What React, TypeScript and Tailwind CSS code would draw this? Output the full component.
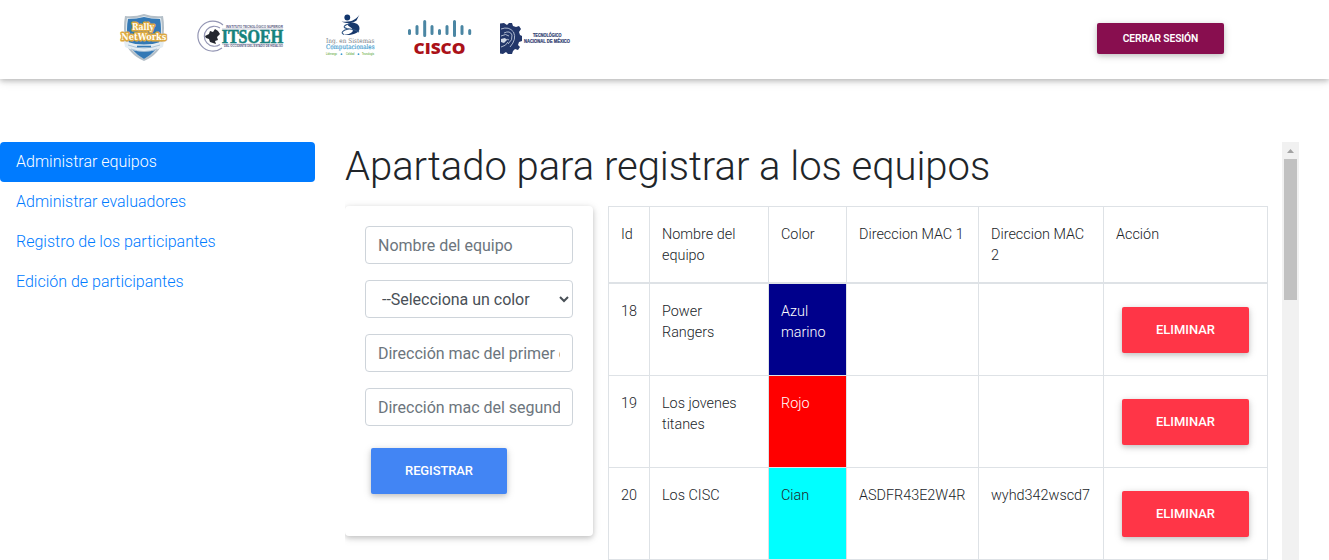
import React from "react";

type Team = {
  id: number;
  name: string;
  color: string;
  cell: string;
  mac1: string;
  mac2: string;
};

const teams: Team[] = [
  { id: 18, name: "Power Rangers", color: "Azul marino", cell: "bg-[#00008b] text-white", mac1: "", mac2: "" },
  { id: 19, name: "Los jovenes titanes", color: "Rojo", cell: "bg-[#ff0000] text-white", mac1: "", mac2: "" },
  { id: 20, name: "Los CISC", color: "Cian", cell: "bg-[#00ffff] text-[#212529]", mac1: "ASDFR43E2W4R", mac2: "wyhd342wscd7" },
];

const links = [
  "Administrar equipos",
  "Administrar evaluadores",
  "Registro de los participantes",
  "Edición de participantes",
];

const raised = "shadow-[0_2px_5px_0_rgba(0,0,0,0.16),0_2px_10px_0_rgba(0,0,0,0.12)]";

function RallyLogo() {
  return (
    <svg width="50" height="50" viewBox="0 0 50 50" className="block overflow-visible">
      <path d="M6 3Q16 4 25 1Q34 4 44 3Q46 14 44 27Q41 41 25 48Q9 41 6 27Q4 14 6 3Z" fill="#b4bfc8" />
      <path d="M8 5Q17 6 25 3Q33 6 42 5Q44 15 42 27Q39 39 25 46Q11 39 8 27Q6 15 8 5Z" fill="#dfe9f0" />
      <path d="M9 6Q18 6 25 4Q32 6 41 6Q43 16 41 27Q38 39 25 46Q12 39 9 27Q7 16 9 6Z" fill="#3479b5" />
      <path d="M5 28Q25 35 45 28L44 34Q25 43 6 34Z" fill="#e4edf3" />
      <path d="M9 32Q25 38 41 32M12 36Q25 41 38 36" stroke="#9db9cf" fill="none" strokeWidth=".8" />
      <path d="M18 33.5h14" stroke="#3479b5" strokeWidth="1.6" />
      <g fontFamily="DejaVu Serif, serif" fontWeight="bold" fill="#fffdf2" stroke="#dca83f" strokeWidth="3" paintOrder="stroke" strokeLinejoin="round" textAnchor="middle">
        <text x="24" y="16.6" fontSize="9.8" textLength="22" lengthAdjust="spacingAndGlyphs">Rally</text>
        <text x="24.8" y="27.4" fontSize="9.8" textLength="45" lengthAdjust="spacingAndGlyphs">NetWorks</text>
      </g>
    </svg>
  );
}

function ItsoehLogo() {
  return (
    <svg width="90" height="38" viewBox="0 0 90 38" className="block overflow-visible">
      <g fill="none" stroke="#9496b4" strokeWidth="1.2">
        <path d="M26 8A15 15 0 1 0 25 31" />
        <path d="M23 11A10 10 0 1 0 23 27.5" />
      </g>
      <path d="M8 19l4-2 1-3 3 1 2-3 3 2 2 3-3 3 1 3-3 1 1 3-3-1-3-1-1-3-3-1z" fill="#25272f" />
      <g fontFamily="Liberation Sans, sans-serif" fontWeight="bold" fill="#55577e">
        <text x="29" y="11" fontSize="3.4" textLength="57" lengthAdjust="spacingAndGlyphs">INSTITUTO TECNOLÓGICO SUPERIOR</text>
        <text x="27" y="30" fontSize="3.2" textLength="59" lengthAdjust="spacingAndGlyphs">DEL OCCIDENTE DEL ESTADO DE HIDALGO</text>
      </g>
      <path d="M25 12h61M25 27.2h61" stroke="#74779a" strokeWidth=".4" />
      <text x="24.7" y="25.8" fontFamily="Liberation Serif, serif" fontWeight="bold" fontSize="19" fill="#16827d" stroke="#16827d" strokeWidth=".6" textLength="61.5" lengthAdjust="spacingAndGlyphs">ITSOEH</text>
    </svg>
  );
}

function SistemasLogo() {
  return (
    <svg width="52" height="44" viewBox="0 0 52 44" className="block overflow-visible">
      <circle cx="22.3" cy="4.5" r="2.9" fill="#12366d" />
      <path d="M34.5 1.5C31 7 26 9.5 16.5 8.5C22 11 28 10.5 31.5 7.5Z" fill="#17386b" />
      <path d="M25 10C31 9 35 12 34.5 16C34 20 27 23 18.5 21.8C27 21.5 31 17.5 25 14C22 12.3 22 10.6 25 10Z" fill="#17386b" />
      <path d="M25 10.5C19 12 17 14.5 22 15.5C27 16.2 30 16.4 34 19M19 21.5C15.5 20.5 17 17 24 16" fill="none" stroke="#315684" strokeWidth="1.1" />
      <g fontFamily="DejaVu Serif, serif">
        <text x="1" y="29.5" fontSize="6.4" fill="#777b7e" textLength="48.5" lengthAdjust="spacingAndGlyphs">Ing. en Sistemas</text>
        <text x="1" y="36" fontSize="6.4" fill="#3e9bd0" stroke="#3e9bd0" strokeWidth=".15" textLength="48.5" lengthAdjust="spacingAndGlyphs">Computacionales</text>
      </g>
      <g fontFamily="Liberation Sans, sans-serif" fontSize="2.6" fill="#7ab65a" fontWeight="bold">
        <text x="1" y="42" textLength="11" lengthAdjust="spacingAndGlyphs">Liderazgo</text>
        <text x="21" y="42" textLength="8.5" lengthAdjust="spacingAndGlyphs">Calidad</text>
        <text x="37" y="42" textLength="12" lengthAdjust="spacingAndGlyphs">Tecnología</text>
      </g>
      <circle cx="16.5" cy="41.2" r=".9" fill="#3e9bd0" />
      <circle cx="33.5" cy="41.2" r=".9" fill="#3e9bd0" />
    </svg>
  );
}

function CiscoLogo() {
  return (
    <svg width="64" height="37" viewBox="0 0 64 37" className="block overflow-visible">
      <path d="M2.5 12.5v3M10 8.5v7M17.7 3.5v14M25 8.5v7M32.5 12.5v3M40 8.5v7M47.5 3.5v14M55 8.5v7M62.7 12.5v3" stroke="#4b86a3" strokeWidth="3" strokeLinecap="round" />
      <text x="6.5" y="35.7" fontFamily="Open Sans, sans-serif" fontWeight="800" fontSize="16.2" fill="#ab1118" textLength="52" lengthAdjust="spacingAndGlyphs">CISCO</text>
    </svg>
  );
}

function TecLogo() {
  return (
    <svg width="72" height="34" viewBox="0 0 72 34" className="block overflow-visible">
      <path d="M1 1.5L5 1L8 3L10 1L13 1L14 4L17 5L20 4L22 7L20 10L21 13L23 14L23 19L20 20L19 23L21 25L19 28L16 27L14 29L13 32L9 32L7 30L4 32L1 31.5Z" fill="#23376a" />
      <path d="M2 7Q10 4 14.5 10Q18 17 11 25M5 11Q11 8 13 13Q14 18 9 22M2 14Q7 11 10 14M3 20Q8 16 10 18M2 25Q7 24 9 20" fill="none" stroke="#bcc6d8" strokeWidth=".9" />
      <path d="M2 17l4-1 2 2-3 3-3-1z" fill="#d3dae6" />
      <g fontFamily="Liberation Sans, sans-serif" fontWeight="bold" fontSize="4.8" fill="#304071" stroke="#304071" strokeWidth=".2">
        <text x="34" y="15.4" textLength="28.5" lengthAdjust="spacingAndGlyphs">TECNOLÓGICO</text>
        <text x="25" y="21" textLength="46" lengthAdjust="spacingAndGlyphs">NACIONAL DE MÉXICO</text>
      </g>
    </svg>
  );
}

function Header() {
  return (
    <header className="flex h-[79px] items-start justify-between bg-white pr-[105px] pl-[119px] shadow-[0_2px_5px_0_rgba(0,0,0,0.2),0_2px_10px_0_rgba(0,0,0,0.12)]">
      <div className="flex">
        <div className="pt-[13px]"><RallyLogo /></div>
        <div className="ml-[28px] pt-[17px]"><ItsoehLogo /></div>
        <div className="ml-[38px] pt-[13px]"><SistemasLogo /></div>
        <div className="ml-[30px] pt-[18px]"><CiscoLogo /></div>
        <div className="ml-[28px] pt-[22px]"><TecLogo /></div>
      </div>
      <button className={`mt-[23px] h-[31px] w-[127px] rounded-xs bg-[#880e4f] text-[10.24px] font-semibold tracking-[-0.11px] text-white ${raised}`}>
        CERRAR SESIÓN
      </button>
    </header>
  );
}

const field =
  "block h-[38px] w-full rounded border border-[#ced4da] bg-white px-3 text-base tracking-[-0.02px] text-[#495057] placeholder:text-[#6c757d] placeholder:opacity-100";

function TeamForm() {
  return (
    <form className={`flex h-[330px] w-[248px] shrink-0 flex-col items-start gap-4 rounded bg-white p-5 ${raised}`}>
      <input className={field} placeholder="Nombre del equipo" />
      <select className={field}>
        <option>--Selecciona un color</option>
      </select>
      <input className={field} placeholder="Dirección mac del primer equipo" />
      <input className={field} placeholder="Dirección mac del segundo equipo" />
      <button type="button" className={`mt-1.5 ml-1.5 h-[46px] w-[136px] rounded-xs bg-[#4285f4] text-[12.96px] font-medium tracking-[-0.08px] text-white ${raised}`}>
        REGISTRAR
      </button>
    </form>
  );
}

const cell = "border-r border-b border-[#dee2e6] px-3 pt-[17px] pb-0 text-left align-top font-light";
const headCell = "border-r border-b-2 border-[#dee2e6] px-3 pt-[17px] pb-0 text-left align-top font-light";

function TeamTable() {
  return (
    <table className="w-[660px] table-fixed border-separate border-spacing-0 border-t border-l border-[#dee2e6] text-[14.4px] leading-[21px]">
      <colgroup>
        <col className="w-[41px]" />
        <col className="w-[119px]" />
        <col className="w-[78px]" />
        <col className="w-[132px]" />
        <col className="w-[125px]" />
        <col className="w-[164px]" />
      </colgroup>
      <thead>
        <tr className="h-[77px]">
          <th className={headCell}>Id</th>
          <th className={headCell}>Nombre del equipo</th>
          <th className={headCell}>Color</th>
          <th className={headCell}>Direccion MAC 1</th>
          <th className={headCell}>Direccion MAC 2</th>
          <th className={headCell}>Acción</th>
        </tr>
      </thead>
      <tbody>
        {teams.map((t) => (
          <tr key={t.id} className="h-[92px]">
            <td className={cell}>{t.id}</td>
            <td className={cell}>{t.name}</td>
            <td className={`${cell} ${t.cell}`}>{t.color}</td>
            <td className={cell}>{t.mac1}</td>
            <td className={cell}>{t.mac2}</td>
            <td className={cell}>
              <button className={`mt-1.5 ml-1.5 block h-[46px] w-[127px] rounded-xs bg-[#ff3547] text-[12.96px] leading-6 font-medium text-white ${raised}`}>
                ELIMINAR
              </button>
            </td>
          </tr>
        ))}
      </tbody>
    </table>
  );
}

function ScrollTrack() {
  return (
    <div className="flex w-[17px] shrink-0 flex-col items-center bg-[#f1f1f1]">
      <svg width="17" height="17" viewBox="0 0 17 17" className="block shrink-0">
        <path d="M5 11L8.5 7L12 11Z" fill="#a3a3a3" />
      </svg>
      <div className="h-[141px] w-[13px] bg-[#c1c1c1]" />
    </div>
  );
}

export default function App() {
  return (
    <div className="flex h-[560px] w-[1329px] flex-col overflow-hidden bg-white font-[Roboto,sans-serif] text-[#212529]">
      <Header />
      <div className="mt-[63px] flex min-h-0 flex-1">
        <nav className="w-[315px] shrink-0">
          {links.map((label, i) => (
            <a
              key={label}
              className={`flex h-10 items-center rounded px-4 text-base font-light ${i === 0 ? "bg-[#007bff] text-white" : "text-[#007bff]"}`}
            >
              {label}
            </a>
          ))}
        </nav>
        <div className="ml-[30px] flex w-[954px] overflow-hidden">
          <main className="w-[937px] shrink-0">
            <h1 className="pt-px text-[40px] leading-[48px] font-light tracking-[-0.03px]">Apartado para registrar a los equipos</h1>
            <div className="mt-[15px] flex items-start gap-[15px]">
              <TeamForm />
              <TeamTable />
            </div>
          </main>
          <ScrollTrack />
        </div>
      </div>
    </div>
  );
}
